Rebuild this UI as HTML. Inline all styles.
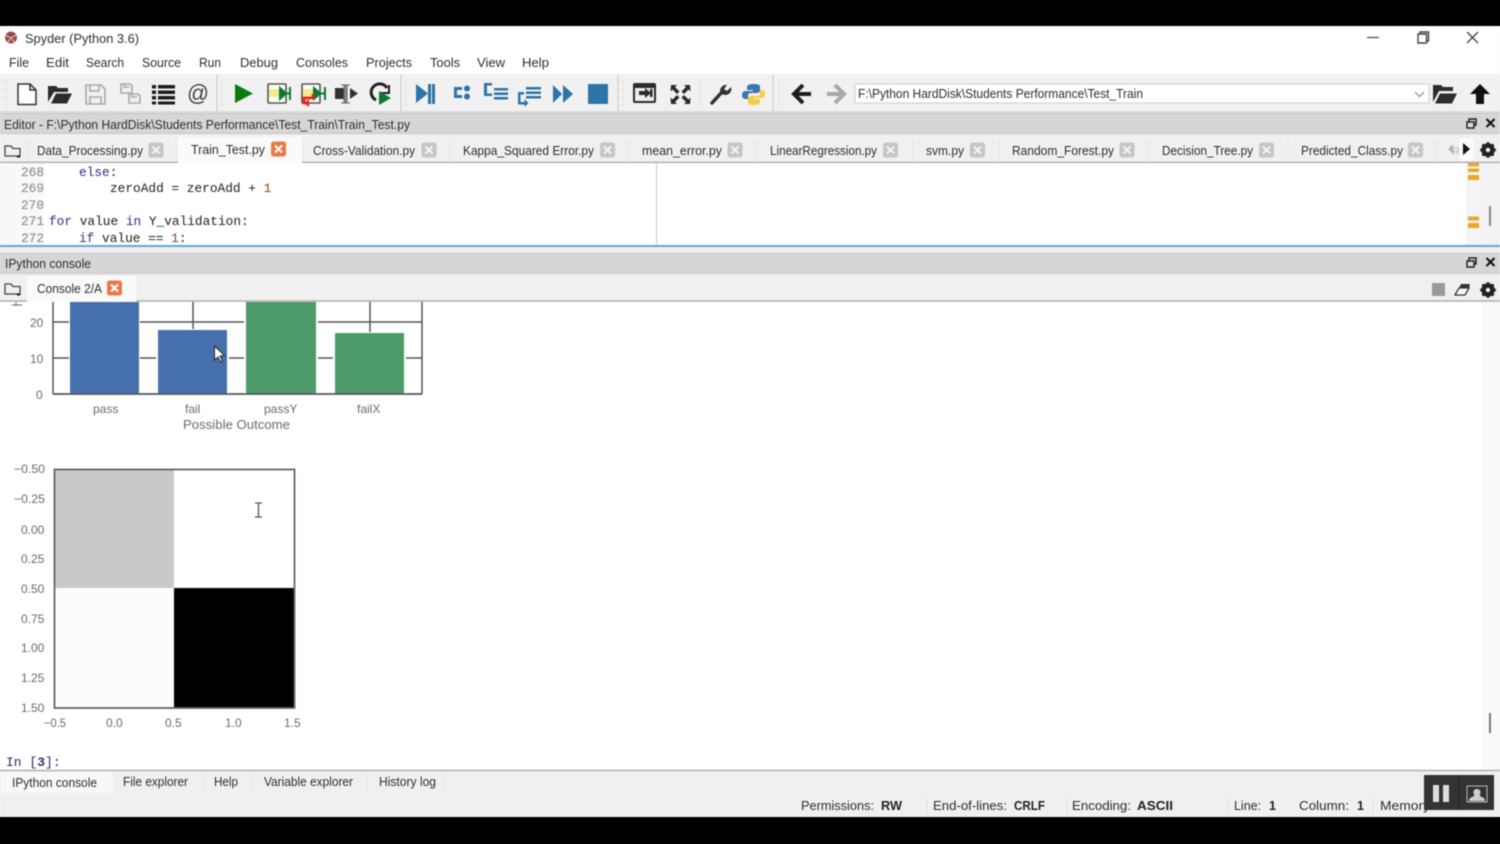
<!DOCTYPE html>
<html><head><meta charset="utf-8"><title>Spyder (Python 3.6)</title>
<style>
html,body{margin:0;padding:0;width:1500px;height:844px;overflow:hidden;background:linear-gradient(#000 26px,#f6f6f6 26px,#f6f6f6 817px,#000 817px)}
svg{display:block;filter:blur(.5px)}
text{font-family:"Liberation Sans",sans-serif;font-size:12.5px;fill:#2e2e2e}
.m{font-family:"Liberation Mono",monospace;font-size:12.8px;stroke:#33333355;stroke-width:.25}
.b{font-weight:bold;fill:#222}
.c{font-size:12px;fill:#6a6a6a}
</style></head><body>
<svg width="1500" height="844" viewBox="0 0 1500 844" xmlns="http://www.w3.org/2000/svg">
<defs>
<g id="x"><rect x="-7.500" y="-7.500" width="15" height="15" rx="2.500" fill="#c6c6c6"/><path d="M-3.500-3.500L3.500 3.500M3.500-3.500L-3.500 3.500" stroke="#f4f4f4" stroke-width="2"/></g>
<g id="xo"><rect x="-7.500" y="-7.500" width="15" height="15" rx="2.500" fill="#e8794a"/><path d="M-3.500-3.500L3.500 3.500M3.500-3.500L-3.500 3.500" stroke="#fff" stroke-width="2"/></g>
<g id="gear"><circle r="4.800" fill="none" stroke="#222" stroke-width="3.800"/><path d="M0-7.800V7.800M-7.800 0H7.800M-5.500-5.500L5.500 5.500M5.500-5.500L-5.500 5.500" stroke="#222" stroke-width="2.800"/><circle r="2.200" fill="#eee"/></g>
<g id="fold"><path d="M5 146h6l2 2.500h7V156H5z" fill="none" stroke="#444" stroke-width="1.300"/><rect x="17" y="155.500" width="3" height="2" fill="#111"/></g>
<g id="dock"><rect x="-3" y="-5" width="7" height="6" fill="none" stroke="#222" stroke-width="1.500"/><rect x="-5" y="-2" width="7" height="6" fill="#ddd" stroke="#222" stroke-width="1.500"/></g>
<path id="cl" d="M-4-4L4 4M4-4L-4 4" stroke="#111" stroke-width="2"/>
</defs>

<rect width="1500" height="844" fill="#000"/>
<rect y="26" width="1500" height="48" fill="#fff"/>
<rect y="74" width="1500" height="39" fill="#f1f1f1"/>
<rect y="111" width="1500" height="2" fill="#dcdcdc"/>

<!-- title bar -->
<circle cx="11" cy="37.500" r="6" fill="#a04a44"/><circle cx="11" cy="37.500" r="2.300" fill="#3a3a3a"/><path d="M5.500 35.500l5.500 2 5.500-2.500M7.500 42.500l3.500-5 3.500 5" stroke="#e9d9d0" stroke-width="1" fill="none"/>
<text x="25" y="43" textLength="114" lengthAdjust="spacingAndGlyphs">Spyder (Python 3.6)</text>
<path d="M1367 37.500h12" stroke="#555" stroke-width="1.300"/>
<path d="M1418 34h8.500v9h-8.500zM1420 34v-2h8.500v9h-2" fill="none" stroke="#444" stroke-width="1.400"/>
<path d="M1467 32l11 11M1478 32l-11 11" stroke="#444" stroke-width="1.300"/>

<!-- menu -->
<text x="9" y="67" textLength="20" lengthAdjust="spacingAndGlyphs">File</text>
<text x="46" y="67" textLength="23" lengthAdjust="spacingAndGlyphs">Edit</text>
<text x="86" y="67" textLength="38" lengthAdjust="spacingAndGlyphs">Search</text>
<text x="142" y="67" textLength="39" lengthAdjust="spacingAndGlyphs">Source</text>
<text x="199" y="67" textLength="22" lengthAdjust="spacingAndGlyphs">Run</text>
<text x="240" y="67" textLength="38" lengthAdjust="spacingAndGlyphs">Debug</text>
<text x="296" y="67" textLength="52" lengthAdjust="spacingAndGlyphs">Consoles</text>
<text x="366" y="67" textLength="46" lengthAdjust="spacingAndGlyphs">Projects</text>
<text x="430" y="67" textLength="30" lengthAdjust="spacingAndGlyphs">Tools</text>
<text x="477" y="67" textLength="28" lengthAdjust="spacingAndGlyphs">View</text>
<text x="522" y="67" textLength="27" lengthAdjust="spacingAndGlyphs">Help</text>

<!-- toolbar separators -->
<path d="M217 75v36M401 75v36M618 75v36M773 75v36" stroke="#c8c8c8"/>
<path d="M6 80v28M222 80v28M406 80v28M623 80v28M779 80v28" stroke="#bbb" stroke-dasharray="1 3"/>
<path d="M700 82v24" stroke="#ddd"/>

<!-- file icons -->
<path d="M18 84h12l6 6v14.500H18zM30 84v6h6" fill="#fff" stroke="#333" stroke-width="1.500"/>
<path d="M48 102V86h8l2 2h10v4H54l-6 10zM51 103.500l5-10h16l-5 10z" fill="#2c2c2c"/>
<path d="M86 85h15l4 4v15H86zM90 85v6h9v-6M90 104v-7h11v7" fill="none" stroke="#aaa" stroke-width="1.600"/>
<path d="M121 84h9l2 2v7h-11zM129 94h9l2 2v7h-11zM124 84v3h5M132 94v3h5" fill="none" stroke="#aaa" stroke-width="1.600"/>
<path d="M152 85h4v3.500h-4zM158 85h17v3.500h-17zM152 90.500h4V94h-4zM158 90.500h17V94h-17zM152 96h4v3.500h-4zM158 96h17v3.500h-17zM152 101.500h4v3h-4zM158 101.500h17v3h-17z" fill="#1d1d1d"/>
<text x="187" y="101" style="font-size:23px;fill:#444" textLength="22" lengthAdjust="spacingAndGlyphs">@</text>

<!-- run icons -->
<path d="M235 84l18 9.500-18 9.500z" fill="#0b7a10"/>
<rect x="268" y="84" width="18" height="19" rx="1" fill="#fff" stroke="#555" stroke-width="1.600"/><rect x="269" y="89" width="16" height="8" fill="#f6e98c"/>
<path d="M280 88l6 5.500-6 5.500zM290 87v13" fill="#0b7a30" stroke="#0b7a30" stroke-width="2"/>
<path d="M286 93.500h4" stroke="#0b7a30" stroke-width="2"/>
<rect x="302" y="84" width="18" height="19" rx="1" fill="#fff" stroke="#555" stroke-width="1.600"/><rect x="303" y="89" width="16" height="8" fill="#f6e98c"/>
<path d="M314 88l6 5.500-6 5.500zM325 87v13" fill="#0b7a30" stroke="#0b7a30" stroke-width="2"/>
<path d="M320 93.500h5" stroke="#0b7a30" stroke-width="2"/>
<path d="M313 94v4h-9v5h5" fill="none" stroke="#e8261a" stroke-width="2.800"/><path d="M309 99v8l-5-4z" fill="#e8261a"/>
<path d="M335 88h9v11h-9z" fill="#333"/><path d="M344 85h3v18h-3zM341 85h9M341 103h9" stroke="#666" fill="#888"/><path d="M350 88l8 5.500-8 5.500z" fill="#333"/>
<path d="M389 85v8h-8" fill="none" stroke="#222" stroke-width="2"/><path d="M387 88a8.500 8.500 0 1 0-11 12" fill="none" stroke="#222" stroke-width="3"/>
<path d="M379 91l12 7-12 7z" fill="#0b7a30"/>

<!-- debug icons -->
<g fill="#2d74ab">
<path d="M416 84l12 9.500-12 9.500zM428 84h3v20h-3zM432 84h3v20h-3z"/>
<path d="M454 87h8v3h-5v5h5v3h-8z"/><circle cx="467" cy="88.500" r="3"/><circle cx="467" cy="96.500" r="3"/>
<path d="M484 84h8v2.500h-5v8h5V97h-8zM494 89h14v2.500h-14zM494 93.500h14v2.500h-14zM494 98h14v2.500h-14z" transform="translate(0,-1)"/>
<path d="M526 87h15v2.500h-15zM526 91.500h15V94h-15zM526 96h15v2.500h-15zM518 92h6v2.500h-3.500V102h4v-3l4 4-4 4v-2.500H518z"/>
<path d="M553 85l9 9-9 9zM563 85l10 9-10 9z"/>
<rect x="588" y="84" width="20" height="20" rx="1"/>
</g>

<!-- pane icons -->
<rect x="634" y="84" width="21" height="18" rx="1" fill="#ececec" stroke="#2b2b2b" stroke-width="2"/><path d="M634 85h21v3h-21zM639 91h6v-3l6 5-6 5v-3h-6z" fill="#2b2b2b"/><path d="M650 89h2.500v8H650z" fill="#2b2b2b"/>
<path d="M671 85h6l-2 2 4.500 4.500-2.500 2.500-4.500-4.500-2 2zM690 85h-6l2 2-4.500 4.500 2.500 2.500 4.500-4.500 2 2zM671 104h6l-2-2 4.500-4.500-2.500-2.500-4.500 4.500-2-2zM690 104h-6l2-2-4.500-4.500 2.500-2.500 4.500 4.500 2-2z" fill="#2a2a2a"/>
<path d="M712 103l10-11" stroke="#333" stroke-width="3.500" stroke-linecap="round"/><path d="M731 87a6 6 0 0 1-9 7l-2-3a6 6 0 0 1 7-6l-3 4 3 2z" fill="#333"/>
<path d="M753 84c-4 0-6 1-6 3.500V90h6v1h-8c-2 0-3 2-3 4s1 4 3 4h3v-3c0-2 1-3 3-3h6c1.500 0 3-1 3-3v-3.500c0-2-3-2.500-7-2.500z" fill="#3b77a8"/>
<path d="M754 105c4 0 6-1 6-3.500V99h-6v-1h8c2 0 3-2 3-4s-1-4-3-4h-2v3c0 2-1 3-3 3h-6c-1.500 0-3 1-3 3v3.500c0 2 2 2.500 6 2.500z" fill="#f3cd47"/>
<path d="M803 85l-9 9 9 9M795 94h16" fill="none" stroke="#1e1e1e" stroke-width="4"/>
<path d="M835 85l9 9-9 9M843 94h-16" fill="none" stroke="#a8a8a8" stroke-width="4"/>

<!-- path box -->
<rect x="855" y="84" width="574" height="19" fill="#fff" stroke="#cfcfcf"/>
<text x="858" y="98" textLength="285" lengthAdjust="spacingAndGlyphs">F:\Python HardDisk\Students Performance\Test_Train</text>
<path d="M1415 92l4.500 4.500 4.500-4.500" fill="none" stroke="#888" stroke-width="1.200"/>
<path d="M1433 102V85h8l2 2h10v4h-14l-6 11zM1435 103.500l5-10h17l-5 10z" fill="#2c2c2c"/>
<path d="M1480 84l-10 10h6v10h8V94h6z" fill="#111"/>

<!-- editor title -->
<rect y="113" width="1500" height="21" fill="#d6d6d6"/>
<path d="M0 113.500h1500M0 133.500h1500" stroke="#c6c6c6"/>
<text x="4" y="129" textLength="406" lengthAdjust="spacingAndGlyphs">Editor - F:\Python HardDisk\Students Performance\Test_Train\Train_Test.py</text>
<use href="#dock" x="1472" y="124"/><use href="#cl" x="1490.500" y="123"/>

<!-- editor tabs -->
<rect y="134" width="1500" height="29" fill="#f0f0f0"/>
<path d="M0 162.500h1500" stroke="#a8a8a8" stroke-width="1.500"/>
<rect x="178" y="137" width="124" height="27" fill="#fafafa"/>
<path d="M28 139v22M176 139v22M303 139v22M450 139v22M629 139v22M757 139v22M913 139v22M999 139v22M1149 139v22M1288 139v22M1437 139v22" stroke="#e6e6e6"/>
<use href="#fold"/>
<g>
<text x="37" y="155" textLength="106" lengthAdjust="spacingAndGlyphs">Data_Processing.py</text><use href="#x" x="156" y="150"/>
<text x="191" y="154" textLength="74" lengthAdjust="spacingAndGlyphs">Train_Test.py</text><use href="#xo" x="278.500" y="149"/>
<text x="313" y="155" textLength="102" lengthAdjust="spacingAndGlyphs">Cross-Validation.py</text><use href="#x" x="429" y="150"/>
<text x="463" y="155" textLength="131" lengthAdjust="spacingAndGlyphs">Kappa_Squared Error.py</text><use href="#x" x="607.500" y="150"/>
<text x="642" y="155" textLength="80" lengthAdjust="spacingAndGlyphs">mean_error.py</text><use href="#x" x="735" y="150"/>
<text x="770" y="155" textLength="107" lengthAdjust="spacingAndGlyphs">LinearRegression.py</text><use href="#x" x="890.500" y="150"/>
<text x="926" y="155" textLength="38" lengthAdjust="spacingAndGlyphs">svm.py</text><use href="#x" x="977.500" y="150"/>
<text x="1012" y="155" textLength="102" lengthAdjust="spacingAndGlyphs">Random_Forest.py</text><use href="#x" x="1127" y="150"/>
<text x="1162" y="155" textLength="91" lengthAdjust="spacingAndGlyphs">Decision_Tree.py</text><use href="#x" x="1266.500" y="150"/>
<text x="1301" y="155" textLength="102" lengthAdjust="spacingAndGlyphs">Predicted_Class.py</text><use href="#x" x="1415.500" y="150"/>
</g>
<path d="M1453 144l-5 5 5 5z" fill="#aab4bc"/>
<text x="1452" y="155" style="font-size:11px;fill:#bbb">R</text>
<rect x="1459" y="138" width="15" height="23" rx="3" fill="#fbfbfb"/>
<path d="M1463 143l7 6-7 6z" fill="#111"/>
<use href="#gear" x="1488" y="150"/>

<!-- editor -->
<rect y="163" width="1500" height="82" fill="#fff"/>
<rect y="163" width="44" height="82" fill="#f8f8f8"/>
<path d="M656.500 163v82" stroke="#c8c8c8"/>
<rect x="1466" y="163" width="34" height="82" fill="#f2f2f2"/>
<rect x="1466" y="163" width="16" height="82" fill="#f4f4f4"/>
<rect x="1468" y="163" width="11" height="3.500" fill="#e8a92e"/><rect x="1468" y="168.500" width="11" height="3.500" fill="#e8a92e"/><rect x="1468" y="175" width="11" height="5" fill="#e8a92e"/>
<rect x="1468" y="216.500" width="11" height="4" fill="#e8a92e"/><rect x="1468" y="223" width="11" height="5" fill="#e8a92e"/>
<rect x="1489" y="206" width="2" height="20" fill="#888"/>
<g class="n">
<text class="m" x="21" y="176" style="fill:#999">268</text>
<text class="m" x="21" y="192" style="fill:#999">269</text>
<text class="m" x="21" y="209" style="fill:#999">270</text>
<text class="m" x="21" y="225" style="fill:#999">271</text>
<text class="m" x="21" y="242" style="fill:#999">272</text>
</g>
<text class="m" x="79" y="176" style="fill:#3a3aa0">else<tspan fill="#333">:</tspan></text>
<text class="m" x="110" y="192">zeroAdd = zeroAdd + <tspan fill="#a0522d">1</tspan></text>
<text class="m" x="49" y="225"><tspan fill="#3a3aa0">for</tspan> value <tspan fill="#3a3aa0">in</tspan> Y_validation:</text>
<text class="m" x="79" y="242"><tspan fill="#3a3aa0">if</tspan> value == <tspan fill="#a0522d">1</tspan>:</text>
<rect y="245" width="1500" height="2" fill="#5ea9d6"/>

<!-- console title -->
<rect y="247" width="1500" height="6" fill="#efefef"/>
<rect y="253" width="1500" height="21" fill="#d6d6d6"/>
<path d="M0 253.500h1500M0 273.500h1500" stroke="#c6c6c6"/>
<text x="5" y="268" textLength="86" lengthAdjust="spacingAndGlyphs">IPython console</text>
<use href="#dock" x="1472" y="263"/><use href="#cl" x="1490.500" y="262"/>

<!-- console tabs -->
<rect y="274" width="1500" height="28" fill="#f0f0f0"/>
<path d="M0 301h1500" stroke="#b0b0b0" stroke-width="1.500"/>
<rect x="27" y="276" width="109" height="26" fill="#fafafa"/>
<use href="#fold" y="138"/>
<text x="37" y="293" textLength="65" lengthAdjust="spacingAndGlyphs">Console 2/A</text>
<use href="#xo" x="114.500" y="288"/>
<rect x="1432" y="283" width="13" height="13" fill="#9a9a9a"/>
<path d="M1455 295l4-7h10l-4 7z" fill="#fff" stroke="#333" stroke-width="1.300"/><path d="M1459 288l2-4h9l-1 4z" fill="#333"/>
<use href="#gear" x="1488" y="290"/>

<!-- console -->
<rect y="302" width="1500" height="468" fill="#fff"/>
<rect x="1482" y="302" width="18" height="468" fill="#f9f9f9"/>
<rect x="1489" y="713" width="2" height="20" fill="#777"/>

<!-- bar chart -->
<g stroke="#555" stroke-width="1.500" fill="none">
<path d="M53 322h369M53 358h369M193 302v92M370 302v92M422 302v92M53 302v92M53 394h369"/>
</g>
<rect x="69" y="302" width="71" height="92" fill="#fff"/><rect x="70" y="302" width="69" height="92" fill="#4670ad"/>
<rect x="156" y="329" width="73" height="65" fill="#fff"/><rect x="158" y="330" width="69" height="64" fill="#4670ad"/>
<rect x="244" y="302" width="74" height="92" fill="#fff"/><rect x="246" y="302" width="70" height="92" fill="#4d9b68"/>
<rect x="333" y="332" width="73" height="62" fill="#fff"/><rect x="335" y="333" width="69" height="61" fill="#4d9b68"/>
<path d="M53 394h369" stroke="#555" stroke-width="1.500"/>
<text class="c" x="30" y="327">20</text><text class="c" x="30" y="363">10</text><text class="c" x="36" y="399">0</text>
<text class="c" x="93" y="413">pass</text><text class="c" x="185" y="413">fail</text><text class="c" x="264" y="413">passY</text><text class="c" x="357" y="413">failX</text>
<text x="183" y="429" style="font-size:13px;fill:#6a6a6a" textLength="107" lengthAdjust="spacingAndGlyphs">Possible Outcome</text>
<path d="M12 305h10" stroke="#777" stroke-width="1.200"/><path d="M16 302v4" stroke="#777"/>
<path d="M214.500 346v14l3.500-3 2.500 5 2-1-2.500-5 4.500-.5z" fill="#fff" stroke="#222" stroke-width="1"/>

<!-- heatmap -->
<rect x="55" y="470" width="119" height="118" fill="#c9c9c9"/>
<rect x="55" y="588" width="119" height="120" fill="#fcfcfc"/>
<rect x="174" y="588" width="120" height="120" fill="#000"/>
<rect x="54.500" y="469.500" width="240" height="238.500" fill="none" stroke="#666" stroke-width="1.800"/>
<path d="M255 503h7M255 517h7M258.500 503v14" stroke="#555" stroke-width="1.300"/>
<text class="c" x="14" y="473" textLength="31" lengthAdjust="spacingAndGlyphs">−0.50</text>
<text class="c" x="14" y="503" textLength="31" lengthAdjust="spacingAndGlyphs">−0.25</text>
<text class="c" x="21" y="534">0.00</text>
<text class="c" x="21" y="563">0.25</text>
<text class="c" x="21" y="593">0.50</text>
<text class="c" x="21" y="623">0.75</text>
<text class="c" x="21" y="652">1.00</text>
<text class="c" x="21" y="682">1.25</text>
<text class="c" x="21" y="712">1.50</text>
<text class="c" x="44" y="727" textLength="22" lengthAdjust="spacingAndGlyphs">−0.5</text>
<text class="c" x="106" y="727">0.0</text>
<text class="c" x="165" y="727">0.5</text>
<text class="c" x="225" y="727">1.0</text>
<text class="c" x="284" y="727">1.5</text>

<text class="m" x="6" y="766" style="font-size:13px;fill:#3a3a80">In [<tspan fill="#3a3a80" font-weight="bold">3</tspan>]:</text>

<!-- bottom -->
<rect y="770" width="1500" height="47" fill="#f0f0f0"/>
<path d="M0 770.500h1500" stroke="#b0b0b0" stroke-width="1.500"/>
<rect x="1" y="772" width="112" height="21" fill="#f8f8f8"/>
<path d="M203 772v20M252 772v20M367 772v20M445 772v20" stroke="#e6e6e6"/>
<text x="12" y="787" textLength="85" lengthAdjust="spacingAndGlyphs">IPython console</text>
<text x="123" y="786" textLength="65" lengthAdjust="spacingAndGlyphs">File explorer</text>
<text x="214" y="786" textLength="24" lengthAdjust="spacingAndGlyphs">Help</text>
<text x="264" y="786" textLength="89" lengthAdjust="spacingAndGlyphs">Variable explorer</text>
<text x="379" y="786" textLength="57" lengthAdjust="spacingAndGlyphs">History log</text>

<text x="801" y="810" textLength="73" lengthAdjust="spacingAndGlyphs">Permissions:</text><text class="b" x="881" y="810" textLength="21" lengthAdjust="spacingAndGlyphs">RW</text>
<text x="933" y="810" textLength="74" lengthAdjust="spacingAndGlyphs">End-of-lines:</text><text class="b" x="1014" y="810" textLength="31" lengthAdjust="spacingAndGlyphs">CRLF</text>
<text x="1072" y="810" textLength="59" lengthAdjust="spacingAndGlyphs">Encoding:</text><text class="b" x="1137" y="810" textLength="36" lengthAdjust="spacingAndGlyphs">ASCII</text>
<text x="1234" y="810" textLength="27" lengthAdjust="spacingAndGlyphs">Line:</text><text class="b" x="1269" y="810">1</text>
<text x="1299" y="810" textLength="50" lengthAdjust="spacingAndGlyphs">Column:</text><text class="b" x="1357" y="810">1</text>
<text x="1380" y="810" textLength="50" lengthAdjust="spacingAndGlyphs">Memory</text>
<path d="M927 798v16M1067 798v16M1228 798v16M1373 798v16" stroke="#e0e0e0"/>

<rect y="817" width="1500" height="27" fill="#000"/>
<rect x="1424" y="775" width="70" height="35" fill="#333"/>
<path d="M1458.500 775v35" stroke="#222"/>
<rect x="1433" y="785" width="6" height="17" fill="#ddd"/><rect x="1443" y="785" width="6" height="17" fill="#ddd"/>
<rect x="1467" y="786" width="20" height="16" fill="#333" stroke="#bbb"/><path d="M1469 801c0-4 4-4 5-5v-2c-1-1-1-5 3-5s4 4 3 5v2c1 1 5 1 5 5z" fill="#ccc"/>
</svg>
</body></html>
